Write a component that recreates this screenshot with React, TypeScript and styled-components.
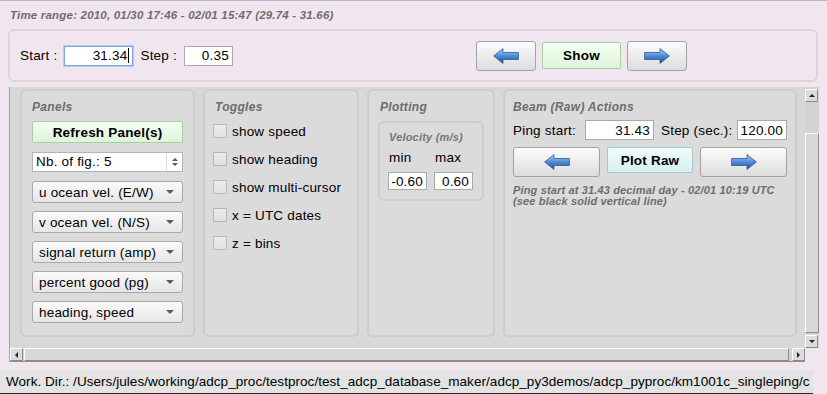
import React from 'react';
import styled, { createGlobalStyle, css } from 'styled-components';

const GlobalStyle = createGlobalStyle`
  html, body {
    margin: 0;
    padding: 0;
  }
  body {
    font-family: "Liberation Sans", Arial, sans-serif;
    font-size: 13.5px;
    letter-spacing: 0.2px;
    color: #000;
    background: #f1e6f0;
  }
`;

const Window = styled.div`
  width: 827px;
  height: 394px;
  box-sizing: border-box;
  border-top: 1px solid #b9b9b9;
  display: flex;
  flex-direction: column;
  overflow: hidden;
`;

const Caption = styled.div`
  height: 28px;
  padding-left: 10px;
  display: flex;
  align-items: center;
  font-size: 11.5px;
  letter-spacing: 0.2px;
  font-weight: bold;
  font-style: italic;
  color: #6d6d6d;
`;

const TopGroup = styled.div`
  margin: 0 9px 0 8px;
  height: 53px;
  box-sizing: border-box;
  border: 2px solid #dcd6dc;
  border-radius: 6px;
  padding: 0 10px;
  display: flex;
  align-items: center;
`;

const FieldRow = styled.div`
  display: flex;
  align-items: center;
  gap: 7px;
`;

const Label = styled.span<{ $w?: number }>`
  white-space: nowrap;
  ${(p) => p.$w && css`width: ${p.$w}px;`}
`;

const Field = styled.div<{ $w: number; $h?: number; $focus?: boolean }>`
  width: ${(p) => p.$w}px;
  height: ${(p) => p.$h ?? 20}px;
  box-sizing: border-box;
  background: #fff;
  border: 1px solid #a9a9a9;
  padding: 0 3px;
  display: flex;
  align-items: center;
  justify-content: flex-end;
  ${(p) =>
    p.$focus &&
    css`
      border-color: #7ea6dc;
      box-shadow: 0 0 0 1px #b3cdef;
    `}
`;

const Caret = styled.span`
  display: inline-block;
  width: 1px;
  height: 15px;
  background: #000;
  margin-left: 1px;
`;

const NavRow = styled.div`
  margin-left: auto;
  margin-right: 119px;
  display: flex;
  align-items: center;
  gap: 6px;
`;

const ArrowButton = styled.div<{ $w: number }>`
  width: ${(p) => p.$w}px;
  height: 30px;
  box-sizing: border-box;
  background: linear-gradient(#fcfcfc, #dcdcdc);
  border: 1px solid #a2a2a2;
  border-radius: 3px;
  display: flex;
  align-items: center;
  justify-content: center;
`;

const TextButton = styled.div<{ $tone: 'green' | 'cyan'; $w?: number; $h: number }>`
  ${(p) => (p.$w ? css`width: ${p.$w}px;` : css`align-self: stretch;`)}
  height: ${(p) => p.$h}px;
  box-sizing: border-box;
  border-radius: 2px;
  font-weight: bold;
  display: flex;
  align-items: center;
  justify-content: center;
  ${(p) =>
    p.$tone === 'green'
      ? css`
          background: linear-gradient(#f4fff3, #def4da);
          border: 1px solid #a8cfa2;
        `
      : css`
          background: linear-gradient(#effcfc, #d7f0f1);
          border: 1px solid #a2c8cb;
        `}
`;

const ScrollFrame = styled.div`
  margin: 5px 0 0 9px;
  width: 810px;
  height: 275px;
  display: grid;
  grid-template-columns: 796px 14px;
  grid-template-rows: 261px 14px;
`;

const Content = styled.div`
  background: #d8d8d8;
  border-left: 1px solid #a4a4a4;
  padding: 2px 0 0 10px;
  display: flex;
  align-items: flex-start;
  gap: 8px;
  overflow: hidden;
`;

const Group = styled.div<{ $w: number; $px?: number }>`
  width: ${(p) => p.$w}px;
  height: 248px;
  box-sizing: border-box;
  flex-shrink: 0;
  background: #dbdbdb;
  border: 2px solid #cdcdcd;
  border-radius: 6px;
  padding: 9px ${(p) => p.$px ?? 10}px 0;
  display: flex;
  flex-direction: column;
`;

const GroupTitle = styled.div<{ $indent?: number }>`
  height: 14px;
  line-height: 14px;
  padding-left: ${(p) => p.$indent ?? 0}px;
  font-size: 12px;
  letter-spacing: 0.3px;
  font-weight: bold;
  font-style: italic;
  color: #6d6d6d;
`;

const Stack = styled.div`
  display: flex;
  flex-direction: column;
  margin-top: 7px;
  gap: 8px;
`;

const Spin = styled.div`
  height: 20px;
  margin: 1px 0;
  box-sizing: border-box;
  background: #fff;
  border: 1px solid #b4b4b4;
  display: flex;
  align-items: stretch;
`;

const SpinText = styled.span`
  flex: 1;
  padding-left: 3px;
  line-height: 18px;
`;

const SpinArrows = styled.span`
  width: 15px;
  border-left: 1px solid #dadada;
  display: flex;
  flex-direction: column;
  align-items: center;
  justify-content: center;
  gap: 2px;
`;

const Tri = styled.span<{ $dir: 'up' | 'down' | 'left' | 'right'; $size?: number; $color?: string }>`
  width: 0;
  height: 0;
  ${(p) => {
    const s = p.$size ?? 4;
    const c = p.$color ?? '#5a5a5a';
    switch (p.$dir) {
      case 'up':
        return css`border-left: ${s}px solid transparent; border-right: ${s}px solid transparent; border-bottom: ${s}px solid ${c};`;
      case 'down':
        return css`border-left: ${s}px solid transparent; border-right: ${s}px solid transparent; border-top: ${s}px solid ${c};`;
      case 'left':
        return css`border-top: ${s}px solid transparent; border-bottom: ${s}px solid transparent; border-right: ${s}px solid ${c};`;
      default:
        return css`border-top: ${s}px solid transparent; border-bottom: ${s}px solid transparent; border-left: ${s}px solid ${c};`;
    }
  }}
`;

const Combo = styled.div`
  height: 22px;
  box-sizing: border-box;
  background: linear-gradient(#fafafa, #e6e6e6);
  border: 1px solid #a9a9a9;
  border-radius: 3px;
  padding: 0 8px 0 6px;
  display: flex;
  align-items: center;
  justify-content: space-between;
`;

const ToggleList = styled.div`
  margin-top: 3px;
  display: flex;
  flex-direction: column;
`;

const ToggleRow = styled.label`
  height: 28px;
  display: flex;
  align-items: center;
  gap: 5px;
`;

const Check = styled.span`
  width: 14px;
  height: 14px;
  box-sizing: border-box;
  background: linear-gradient(#ececec, #e0e0e0);
  border: 1px solid #b8b8b8;
  border-radius: 1px;
`;

const SubGroup = styled.div`
  margin-top: 7px;
  width: 106px;
  height: 80px;
  box-sizing: border-box;
  border: 2px solid #cdcdcd;
  border-radius: 6px;
  padding: 8px 0 0 8px;
  display: flex;
  flex-direction: column;
`;

const SubTitle = styled.div`
  height: 13px;
  line-height: 13px;
  padding-left: 1px;
  font-size: 11px;
  font-weight: bold;
  font-style: italic;
  color: #757575;
  letter-spacing: 0.2px;
`;

const RangeGrid = styled.div`
  margin-top: 6px;
  display: grid;
  grid-template-columns: 39px 39px;
  column-gap: 7px;
  row-gap: 6px;
  & > span {
    padding-left: 1px;
    line-height: 16px;
  }
`;

const BeamFields = styled.div`
  margin-top: 6px;
  height: 20px;
  display: flex;
  align-items: center;
`;

const BeamButtons = styled.div`
  margin-top: 7px;
  display: grid;
  grid-template-columns: repeat(3, 1fr);
  gap: 7px;
  align-items: center;
`;

const Note = styled.div`
  margin-top: 8px;
  font-size: 11px;
  letter-spacing: 0.15px;
  line-height: 11px;
  font-weight: bold;
  font-style: italic;
  color: #6d6d6d;
  white-space: nowrap;
`;

const VScroll = styled.div`
  background: #d4d4d4;
  padding-top: 2px;
  display: flex;
  flex-direction: column;
`;

const HScroll = styled.div`
  background: #d4d4d4;
  border-left: 1px solid #a4a4a4;
  border-bottom: 1px solid #8c8c8c;
  display: flex;
  align-items: stretch;
`;

const ScrollArrow = styled.div`
  width: 13px;
  height: 13px;
  box-sizing: border-box;
  flex-shrink: 0;
  background: #dcdcdc;
  border: 1px solid;
  border-color: #fff #8a8a8a #8a8a8a #fff;
  display: flex;
  align-items: center;
  justify-content: center;
`;

const Thumb = styled.div<{ $vertical?: boolean }>`
  flex: 1;
  box-sizing: border-box;
  background: #d8d8d8;
  border: 1px solid;
  border-color: #fff #8a8a8a #8a8a8a #fff;
  ${(p) => (p.$vertical ? css`margin: 31px 0 2px;` : css`margin: 0 3px 0 1px;`)}
`;

const StatusBar = styled.div`
  margin-top: 8px;
  width: 813px;
  height: 24px;
  box-sizing: border-box;
  background: #e3e3e3;
  border-bottom: 1px solid #2a2a2a;
  padding-left: 6px;
  line-height: 23px;
  letter-spacing: 0.05px;
  white-space: nowrap;
  overflow: hidden;
`;

const ArrowIcon = ({ dir }: { dir: 'left' | 'right' }) => (
  <svg width="26" height="16" viewBox="0 0 26 16">
    <defs>
      <linearGradient id={`arrow-${dir}`} x1="0" y1="0" x2="0" y2="1">
        <stop offset="0" stopColor="#a9cff3" />
        <stop offset="0.5" stopColor="#4f8cd6" />
        <stop offset="1" stopColor="#1f4f96" />
      </linearGradient>
    </defs>
    <polygon
      points={
        dir === 'left'
          ? '0.6,8 10,0.6 10,4.5 25.4,4.5 25.4,11.5 10,11.5 10,15.4'
          : '25.4,8 16,0.6 16,4.5 0.6,4.5 0.6,11.5 16,11.5 16,15.4'
      }
      fill={`url(#arrow-${dir})`}
      stroke="#2d5c9c"
      strokeWidth="0.8"
      strokeLinejoin="round"
    />
  </svg>
);

const PANELS = [
  'u ocean vel. (E/W)',
  'v ocean vel. (N/S)',
  'signal return (amp)',
  'percent good (pg)',
  'heading, speed',
];

const TOGGLES = ['show speed', 'show heading', 'show multi-cursor', 'x = UTC dates', 'z = bins'];

function App() {
  return (
    <>
      <GlobalStyle />
      <Window>
        <Caption>Time range: 2010, 01/30 17:46 - 02/01 15:47 (29.74 - 31.66)</Caption>

        <TopGroup>
          <FieldRow>
            <Label>Start :</Label>
            <Field $w={69} $focus>
              31.34
              <Caret />
            </Field>
            <Label>Step :</Label>
            <Field $w={49}>0.35</Field>
          </FieldRow>
          <NavRow>
            <ArrowButton $w={60}>
              <ArrowIcon dir="left" />
            </ArrowButton>
            <TextButton $tone="green" $w={79} $h={27}>
              Show
            </TextButton>
            <ArrowButton $w={60}>
              <ArrowIcon dir="right" />
            </ArrowButton>
          </NavRow>
        </TopGroup>

        <ScrollFrame>
          <Content>
            <Group $w={175}>
              <GroupTitle>Panels</GroupTitle>
              <Stack>
                <TextButton $tone="green" $h={22}>
                  Refresh Panel(s)
                </TextButton>
                <Spin>
                  <SpinText>Nb. of fig.: 5</SpinText>
                  <SpinArrows>
                    <Tri $dir="up" $size={3.5} />
                    <Tri $dir="down" $size={3.5} />
                  </SpinArrows>
                </Spin>
                {PANELS.map((p) => (
                  <Combo key={p}>
                    <span>{p}</span>
                    <Tri $dir="down" $size={4} />
                  </Combo>
                ))}
              </Stack>
            </Group>

            <Group $w={156} $px={8}>
              <GroupTitle $indent={2}>Toggles</GroupTitle>
              <ToggleList>
                {TOGGLES.map((t) => (
                  <ToggleRow key={t}>
                    <Check />
                    {t}
                  </ToggleRow>
                ))}
              </ToggleList>
            </Group>

            <Group $w={128} $px={9}>
              <GroupTitle $indent={2}>Plotting</GroupTitle>
              <SubGroup>
                <SubTitle>Velocity (m/s)</SubTitle>
                <RangeGrid>
                  <span>min</span>
                  <span>max</span>
                  <Field $w={39} $h={18}>-0.60</Field>
                  <Field $w={39} $h={18}>0.60</Field>
                </RangeGrid>
              </SubGroup>
            </Group>

            <Group $w={294} $px={8}>
              <GroupTitle>Beam (Raw) Actions</GroupTitle>
              <BeamFields>
                <Label $w={72}>Ping start:</Label>
                <Field $w={69}>31.43</Field>
                <Label $w={76} style={{ marginLeft: 7 }}>
                  Step (sec.):
                </Label>
                <Field $w={50}>120.00</Field>
              </BeamFields>
              <BeamButtons>
                <ArrowButton $w={87}>
                  <ArrowIcon dir="left" />
                </ArrowButton>
                <TextButton $tone="cyan" $h={26}>
                  Plot Raw
                </TextButton>
                <ArrowButton $w={87}>
                  <ArrowIcon dir="right" />
                </ArrowButton>
              </BeamButtons>
              <Note>
                Ping start at 31.43 decimal day - 02/01 10:19 UTC
                <br />
                (see black solid vertical line)
              </Note>
            </Group>
          </Content>

          <VScroll>
            <ScrollArrow>
              <Tri $dir="up" $size={3.5} $color="#222" />
            </ScrollArrow>
            <Thumb $vertical />
            <ScrollArrow>
              <Tri $dir="down" $size={3.5} $color="#222" />
            </ScrollArrow>
          </VScroll>

          <HScroll>
            <ScrollArrow>
              <Tri $dir="left" $size={3.5} $color="#222" />
            </ScrollArrow>
            <Thumb />
            <ScrollArrow>
              <Tri $dir="right" $size={3.5} $color="#222" />
            </ScrollArrow>
          </HScroll>
          <div />
        </ScrollFrame>

        <StatusBar>
          Work. Dir.: /Users/jules/working/adcp_proc/testproc/test_adcp_database_maker/adcp_py3demos/adcp_pyproc/km1001c_singleping/c
        </StatusBar>
      </Window>
    </>
  );
}

export default App;
